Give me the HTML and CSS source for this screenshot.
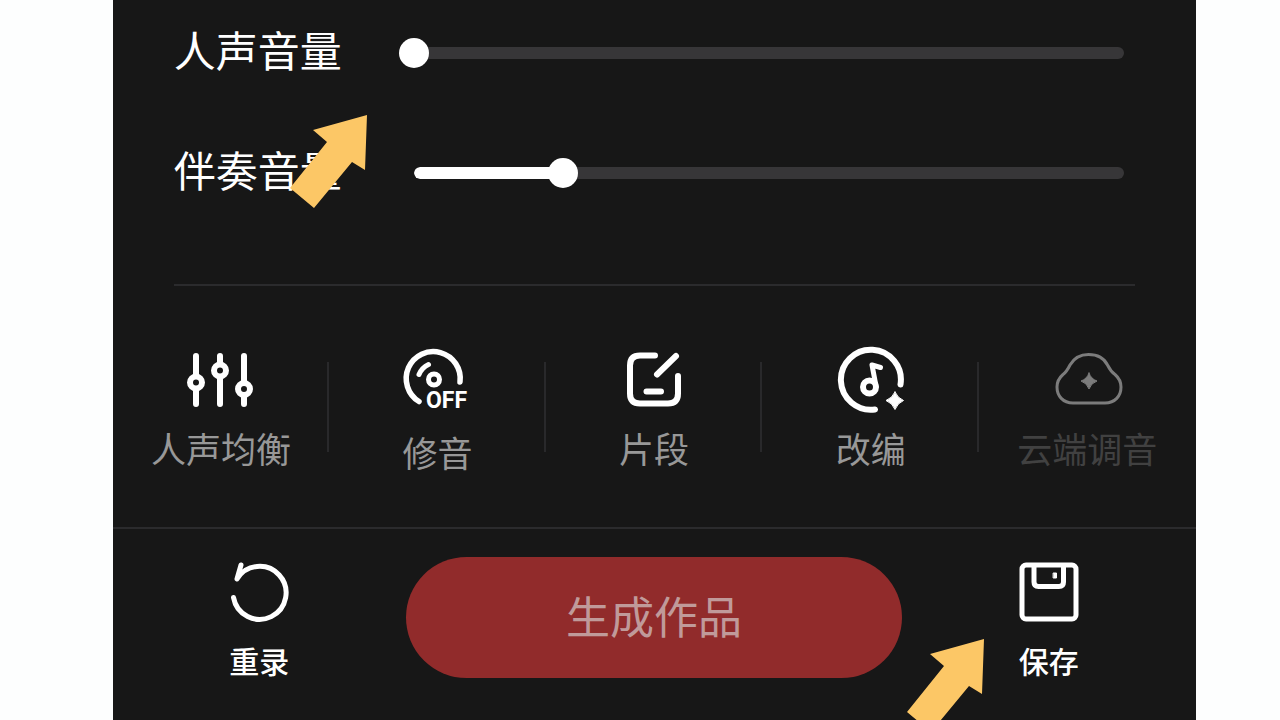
FILE: index.html
```
<!DOCTYPE html>
<html lang="zh-CN">
  <head>
    <meta charset="UTF-8" />
    <meta name="viewport" content="width=device-width, initial-scale=1.0" />
    <title>生成作品</title>
    <link rel="stylesheet" href="styles.css">
  </head>
  <body>
    <main class="panel">
      <section class="volumes">
        <div class="volume">
          <label for="voice">人声音量</label>
          <div class="slider">
            <div class="track"><div class="fill" style="width: 0%"></div></div>
            <input type="range" id="voice" min="0" max="100" value="0" />
          </div>
        </div>
        <div class="volume">
          <label for="backing">伴奏音量</label>
          <div class="slider">
            <div class="track"><div class="fill" style="width: 21%"></div></div>
            <input type="range" id="backing" min="0" max="100" value="21" />
          </div>
          <svg class="arrow arrow-volume" viewBox="0 0 78 94" aria-hidden="true">
            <path d="M78 0L24 15L38 27L1 73L25 93L63 47L76 55Z" />
          </svg>
        </div>
      </section>

      <section class="tools">
        <button type="button" class="tool">
          <svg viewBox="0 0 72 68" aria-hidden="true">
            <path d="M11 10V29M11 44V58M35 10V17M35 32V58M59 10V36M59 50V58" stroke-width="6" />
            <g stroke-width="6">
              <circle cx="11" cy="36.5" r="6" />
              <circle cx="35" cy="24.5" r="6" />
              <circle cx="59" cy="43" r="6" />
            </g>
          </svg>
          <span>人声均衡</span>
        </button>
        <button type="button" class="tool tool-tune">
          <svg viewBox="0 0 72 68" aria-hidden="true">
            <path d="M59 36A27 27 0 1 0 18 55.5" stroke-width="5.5" />
            <circle cx="33" cy="33.5" r="5.5" stroke-width="5" />
            <path d="M18 28.5Q21 21.5 27.5 18.5" stroke-width="5" />
            <text x="25" y="62">OFF</text>
          </svg>
          <span>修音</span>
        </button>
        <button type="button" class="tool">
          <svg viewBox="0 0 72 68" aria-hidden="true">
            <path d="M37 9.5H22Q12 9.5 12 19.5V47.5Q12 57.5 22 57.5H50Q60 57.5 60 47.5V30" stroke-width="6" />
            <path d="M58 10L39 28.5M28.5 45.5H43" stroke-width="6" />
          </svg>
          <span>片段</span>
        </button>
        <button type="button" class="tool">
          <svg viewBox="0 0 72 68" aria-hidden="true">
            <path d="M65.500 38.5A30 30 0 1 0 40 63.5" stroke-width="6" />
            <circle cx="34.5" cy="41" r="6.5" stroke-width="6" />
            <path d="M41 40L37 19L45.5 21.5" stroke-width="5" />
            <path class="solid" d="M60 46Q62.500 52 68.500 54.500Q62.500 57 60 63.500Q57.500 57 51 54.500Q57.500 52 60 46Z" stroke-width="1" />
          </svg>
          <span>改编</span>
        </button>
        <button type="button" class="tool" disabled>
          <svg viewBox="0 0 72 68" aria-hidden="true">
            <path d="M37.5 8.5C29 8.500 23 12 19 19C17 23 15.500 26 12 28.500C8 32 6 36 6 41C6 50 12 57 22 57H54C64 57 70 50 70 41C70 36 68 32 64 28.500C60.500 26 58.500 23 56.500 19C53 12 46.500 8.500 37.500 8.500Z" stroke-width="3" />
            <path class="solid" d="M38 27Q40 33 46 35Q40 37 38 43Q36 37 30 35Q36 33 38 27Z" stroke-width="1" />
          </svg>
          <span>云端调音</span>
        </button>
      </section>

      <footer class="actions">
        <button type="button" class="action">
          <svg viewBox="0 0 64 64" aria-hidden="true">
            <path d="M14 5L10 19A26.5 26.5 0 1 1 6.5 37.5" stroke-width="5" />
          </svg>
          <span>重录</span>
        </button>
        <button type="button" class="create">生成作品</button>
        <div class="save">
          <button type="button" class="action">
            <svg viewBox="0 0 64 64" aria-hidden="true">
              <rect x="5" y="5" width="54" height="54" rx="4" stroke-width="5" />
              <path d="M17 6V22Q17 26.500 21.500 26.500H42Q46.500 26.500 46.500 22V6" stroke-width="5" />
              <rect class="solid" x="36.5" y="13" width="3" height="5" stroke-width="1" />
            </svg>
            <span>保存</span>
          </button>
          <svg class="arrow arrow-save" viewBox="0 0 78 94" aria-hidden="true">
            <path d="M78 0L24 15L38 27L1 73L25 93L63 47L76 55Z" />
          </svg>
        </div>
      </footer>
    </main>

    <script>
      document.querySelectorAll(".slider input").forEach((input) => {
        input.addEventListener("input", () => {
          input.parentElement.querySelector(".fill").style.width =
            input.value + "%";
        });
      });
    </script>
  </body>
</html>
```
FILE: styles.css
```
* {
  box-sizing: border-box;
}

body {
  margin: 0;
  background-color: #fdfefe;
  font-family: "Noto Sans CJK SC", sans-serif;
}

button {
  padding: 0;
  border: none;
  background: none;
  color: white;
  font-family: inherit;
  cursor: pointer;
}

svg {
  display: block;
  flex: none;
  fill: none;
  stroke: currentColor;
  stroke-linecap: round;
  stroke-linejoin: round;
}

.solid {
  fill: currentColor;
}

.panel {
  min-height: 100vh;
  margin-left: 8.8%;
  margin-right: 6.6%;
  padding-top: 23px;
  background-color: #171717;
  color: white;
  overflow: hidden;
}

/* volume sliders */
.volumes {
  display: flex;
  flex-direction: column;
  gap: 60px;
  margin: 0 61px;
  padding-bottom: 81px;
  border-bottom: 2px solid #2b2b2d;
}

.volume {
  position: relative;
  display: flex;
  align-items: center;
  gap: 72px;
  height: 60px;
  padding-right: 11px;
}

.volume label {
  padding-bottom: 8px;
  font-size: 42px;
  line-height: 56px;
  white-space: nowrap;
}

.slider {
  flex: 1;
  display: grid;
  align-items: center;
}

.track,
.slider input {
  grid-area: 1 / 1;
}

.track {
  height: 12px;
  border-radius: 6px;
  background-color: #373638;
  overflow: hidden;
}

.fill {
  height: 100%;
  border-radius: 6px;
  background-color: white;
}

.slider input {
  appearance: none;
  width: calc(100% + 30px);
  height: 30px;
  margin: 0 -15px;
  background: none;
}

.slider input::-webkit-slider-thumb {
  appearance: none;
  width: 30px;
  height: 30px;
  border-radius: 50%;
  background-color: white;
}

/* tools */
.tools {
  display: grid;
  grid-template-columns: repeat(5, 1fr);
  padding: 60px 0 55px;
  border-bottom: 2px solid #2b2b2d;
}

.tool {
  display: flex;
  flex-direction: column;
  align-items: center;
  gap: 12px;
  height: 126px;
  background: linear-gradient(#29292b, #29292b) right 16px / 2px 90px no-repeat;
}

.tool:last-child {
  background: none;
}

.tool svg {
  width: 72px;
  height: 68px;
}

.tool text {
  fill: currentColor;
  stroke: none;
  font-family: Roboto, sans-serif;
  font-size: 23px;
  font-weight: 700;
}

.tool span {
  color: #989898;
  font-size: 35px;
  line-height: 44px;
}

.tool-tune {
  gap: 16px;
}

.tool:disabled {
  color: #7c7c7c;
  cursor: default;
}

.tool:disabled span {
  color: #414141;
}

/* bottom bar */
.actions {
  display: grid;
  grid-template-columns: 1fr 45.8% 1fr;
  padding: 28px 0;
}

.action {
  display: flex;
  flex-direction: column;
  align-items: center;
  gap: 14px;
  width: 100%;
  padding-top: 3px;
  font-size: 30px;
  font-weight: 500;
  line-height: 44px;
}

.action svg {
  width: 64px;
  height: 64px;
}

.create {
  height: 121px;
  padding-bottom: 5px;
  border-radius: 61px;
  background-color: #912b2b;
  color: #c09a9a;
  font-size: 44px;
}

.save {
  position: relative;
}

/* pointers over the controls */
.arrow {
  position: absolute;
  width: 78px;
  height: 94px;
  fill: #fcc766;
  stroke: none;
}

.arrow-volume {
  left: 115px;
  top: -28px;
}

.arrow-save {
  left: 4px;
  top: 82px;
}
```
